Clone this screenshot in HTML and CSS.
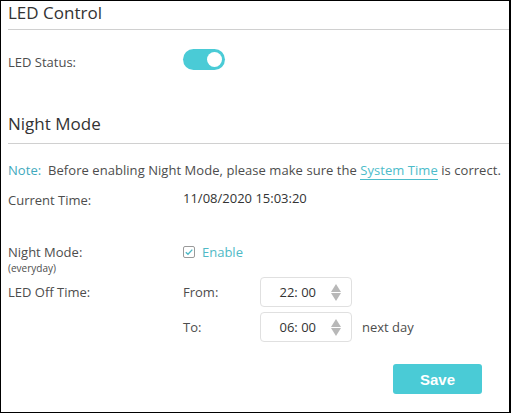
FILE: index.html
```html
<!DOCTYPE html>
<html>
<head>
<meta charset="utf-8">
<link rel="stylesheet" href="styles.css">
</head>
<body>
<div class="frame">
  <h2 class="title first">LED Control</h2>
  <div class="row led-row">
    <div class="label">LED Status:</div>
    <div class="toggle"><span class="knob"></span></div>
  </div>

  <h2 class="title second">Night Mode</h2>
  <p class="note"><span class="note-key">Note:</span>&nbsp; Before enabling Night Mode, please make sure the <a class="link" href="#">System Time</a> is correct.</p>

  <div class="row time-row">
    <div class="label">Current Time:</div>
    <div class="value">11/08/2020 15:03:20</div>
  </div>

  <div class="row mode-row">
    <div class="label"><div class="main">Night Mode:</div><div class="sub">(everyday)</div></div>
    <label class="check">
      <span class="box"><svg width="10" height="10" viewBox="0 0 10 10"><path d="M1.8 5.2 L4 7.3 L8.3 2.6" fill="none" stroke="#4fb9c6" stroke-width="1.4"/></svg></span>
      <span class="check-text">Enable</span>
    </label>
  </div>

  <div class="off">
    <div class="label off-label">LED Off Time:</div>
    <div class="off-fields">
      <div class="field">
        <span class="field-label">From:</span>
        <div class="spin"><span class="spin-val">22: 00</span><span class="arrows"><span class="up"></span><span class="down"></span></span></div>
      </div>
      <div class="field">
        <span class="field-label">To:</span>
        <div class="spin"><span class="spin-val">06: 00</span><span class="arrows"><span class="up"></span><span class="down"></span></span></div>
        <span class="after">next day</span>
      </div>
    </div>
  </div>

  <div class="actions"><button class="save">Save</button></div>
</div>
</body>
</html>
```
FILE: styles.css
```css
html, body {
  margin: 0;
  padding: 0;
  background: #fff;
}
.frame {
  box-sizing: border-box;
  width: 511px;
  height: 413px;
  border-top: 1px solid #000;
  border-left: 1px solid #000;
  border-right: 2px solid #000;
  border-bottom: 1px solid #000;
  padding-left: 7px;
  font-family: "Open Sans", "Liberation Sans", sans-serif;
  font-size: 13px;
  color: #4d4d4d;
}
.title {
  margin: 0;
  font-weight: normal;
  font-size: 17px;
  line-height: 24px;
  color: #333;
  border-bottom: 1px solid #d0d0d0;
  box-sizing: border-box;
}
.title.first {
  height: 29px;
}
.title.second {
  margin-top: 42px;
  height: 32px;
}
.row {
  display: flex;
  align-items: flex-start;
}
.label {
  width: 175px;
  flex: none;
}
.led-row {
  margin-top: 19px;
  align-items: center;
  height: 21px;
}
.led-row .label {
  padding-top: 4px;
}
.toggle {
  width: 42px;
  height: 21px;
  border-radius: 11px;
  background: #4acbd6;
  position: relative;
}
.knob {
  position: absolute;
  right: 3px;
  top: 3px;
  width: 15px;
  height: 15px;
  border-radius: 50%;
  background: #fff;
}
.note {
  margin: 17px 0 0;
  line-height: 18px;
  white-space: nowrap;
  letter-spacing: 0.05px;
}
.note-key {
  color: #3fa9bd;
}
.link {
  color: #4cbcca;
  text-decoration: none;
  border-bottom: 1px solid #4cbcca;
}
.time-row {
  margin-top: 12px;
  line-height: 18px;
}
.value {
  margin-top: -2px;
  color: #333;
}
.mode-row {
  margin-top: 34px;
  line-height: 18px;
}
.main {
  line-height: 18px;
}
.sub {
  font-size: 10px;
  line-height: 14px;
}
.check {
  display: flex;
  align-items: center;
  height: 18px;
}
.box {
  box-sizing: border-box;
  width: 12px;
  height: 12px;
  border: 1px solid #9a9a9a;
  border-radius: 2px;
  display: flex;
  align-items: center;
  justify-content: center;
}
.check-text {
  margin-left: 7px;
  color: #4fb9c6;
  font-size: 13px;
}
.off {
  display: flex;
  margin-top: 2px;
}
.off-label {
  padding-top: 6px;
  line-height: 18px;
}
.off-fields {
  display: flex;
  flex-direction: column;
  gap: 5px;
}
.field {
  display: flex;
  align-items: center;
}
.field-label {
  width: 77px;
  line-height: 18px;
}
.spin {
  box-sizing: border-box;
  width: 92px;
  height: 30px;
  border: 1px solid #e0e0e0;
  border-radius: 4px;
  display: flex;
  align-items: center;
  justify-content: flex-end;
  padding-right: 10px;
  color: #333;
  font-size: 13px;
}
.spin-val {
  margin-right: 15px;
}
.arrows {
  display: flex;
  flex-direction: column;
  gap: 1px;
}
.up {
  width: 0;
  height: 0;
  border-left: 5px solid transparent;
  border-right: 5px solid transparent;
  border-bottom: 8px solid #b8b8b8;
}
.down {
  width: 0;
  height: 0;
  border-left: 5px solid transparent;
  border-right: 5px solid transparent;
  border-top: 8px solid #b8b8b8;
}
.after {
  margin-left: 10px;
  line-height: 18px;
}
.actions {
  display: flex;
  justify-content: flex-end;
  padding-right: 27px;
  margin-top: 22px;
}
.save {
  width: 89px;
  height: 30px;
  border: none;
  border-radius: 3px;
  background: #4acbd6;
  color: #fff;
  font-family: "Liberation Sans", Arial, sans-serif;
  font-weight: bold;
  font-size: 15px;
  padding: 0;
}
```
